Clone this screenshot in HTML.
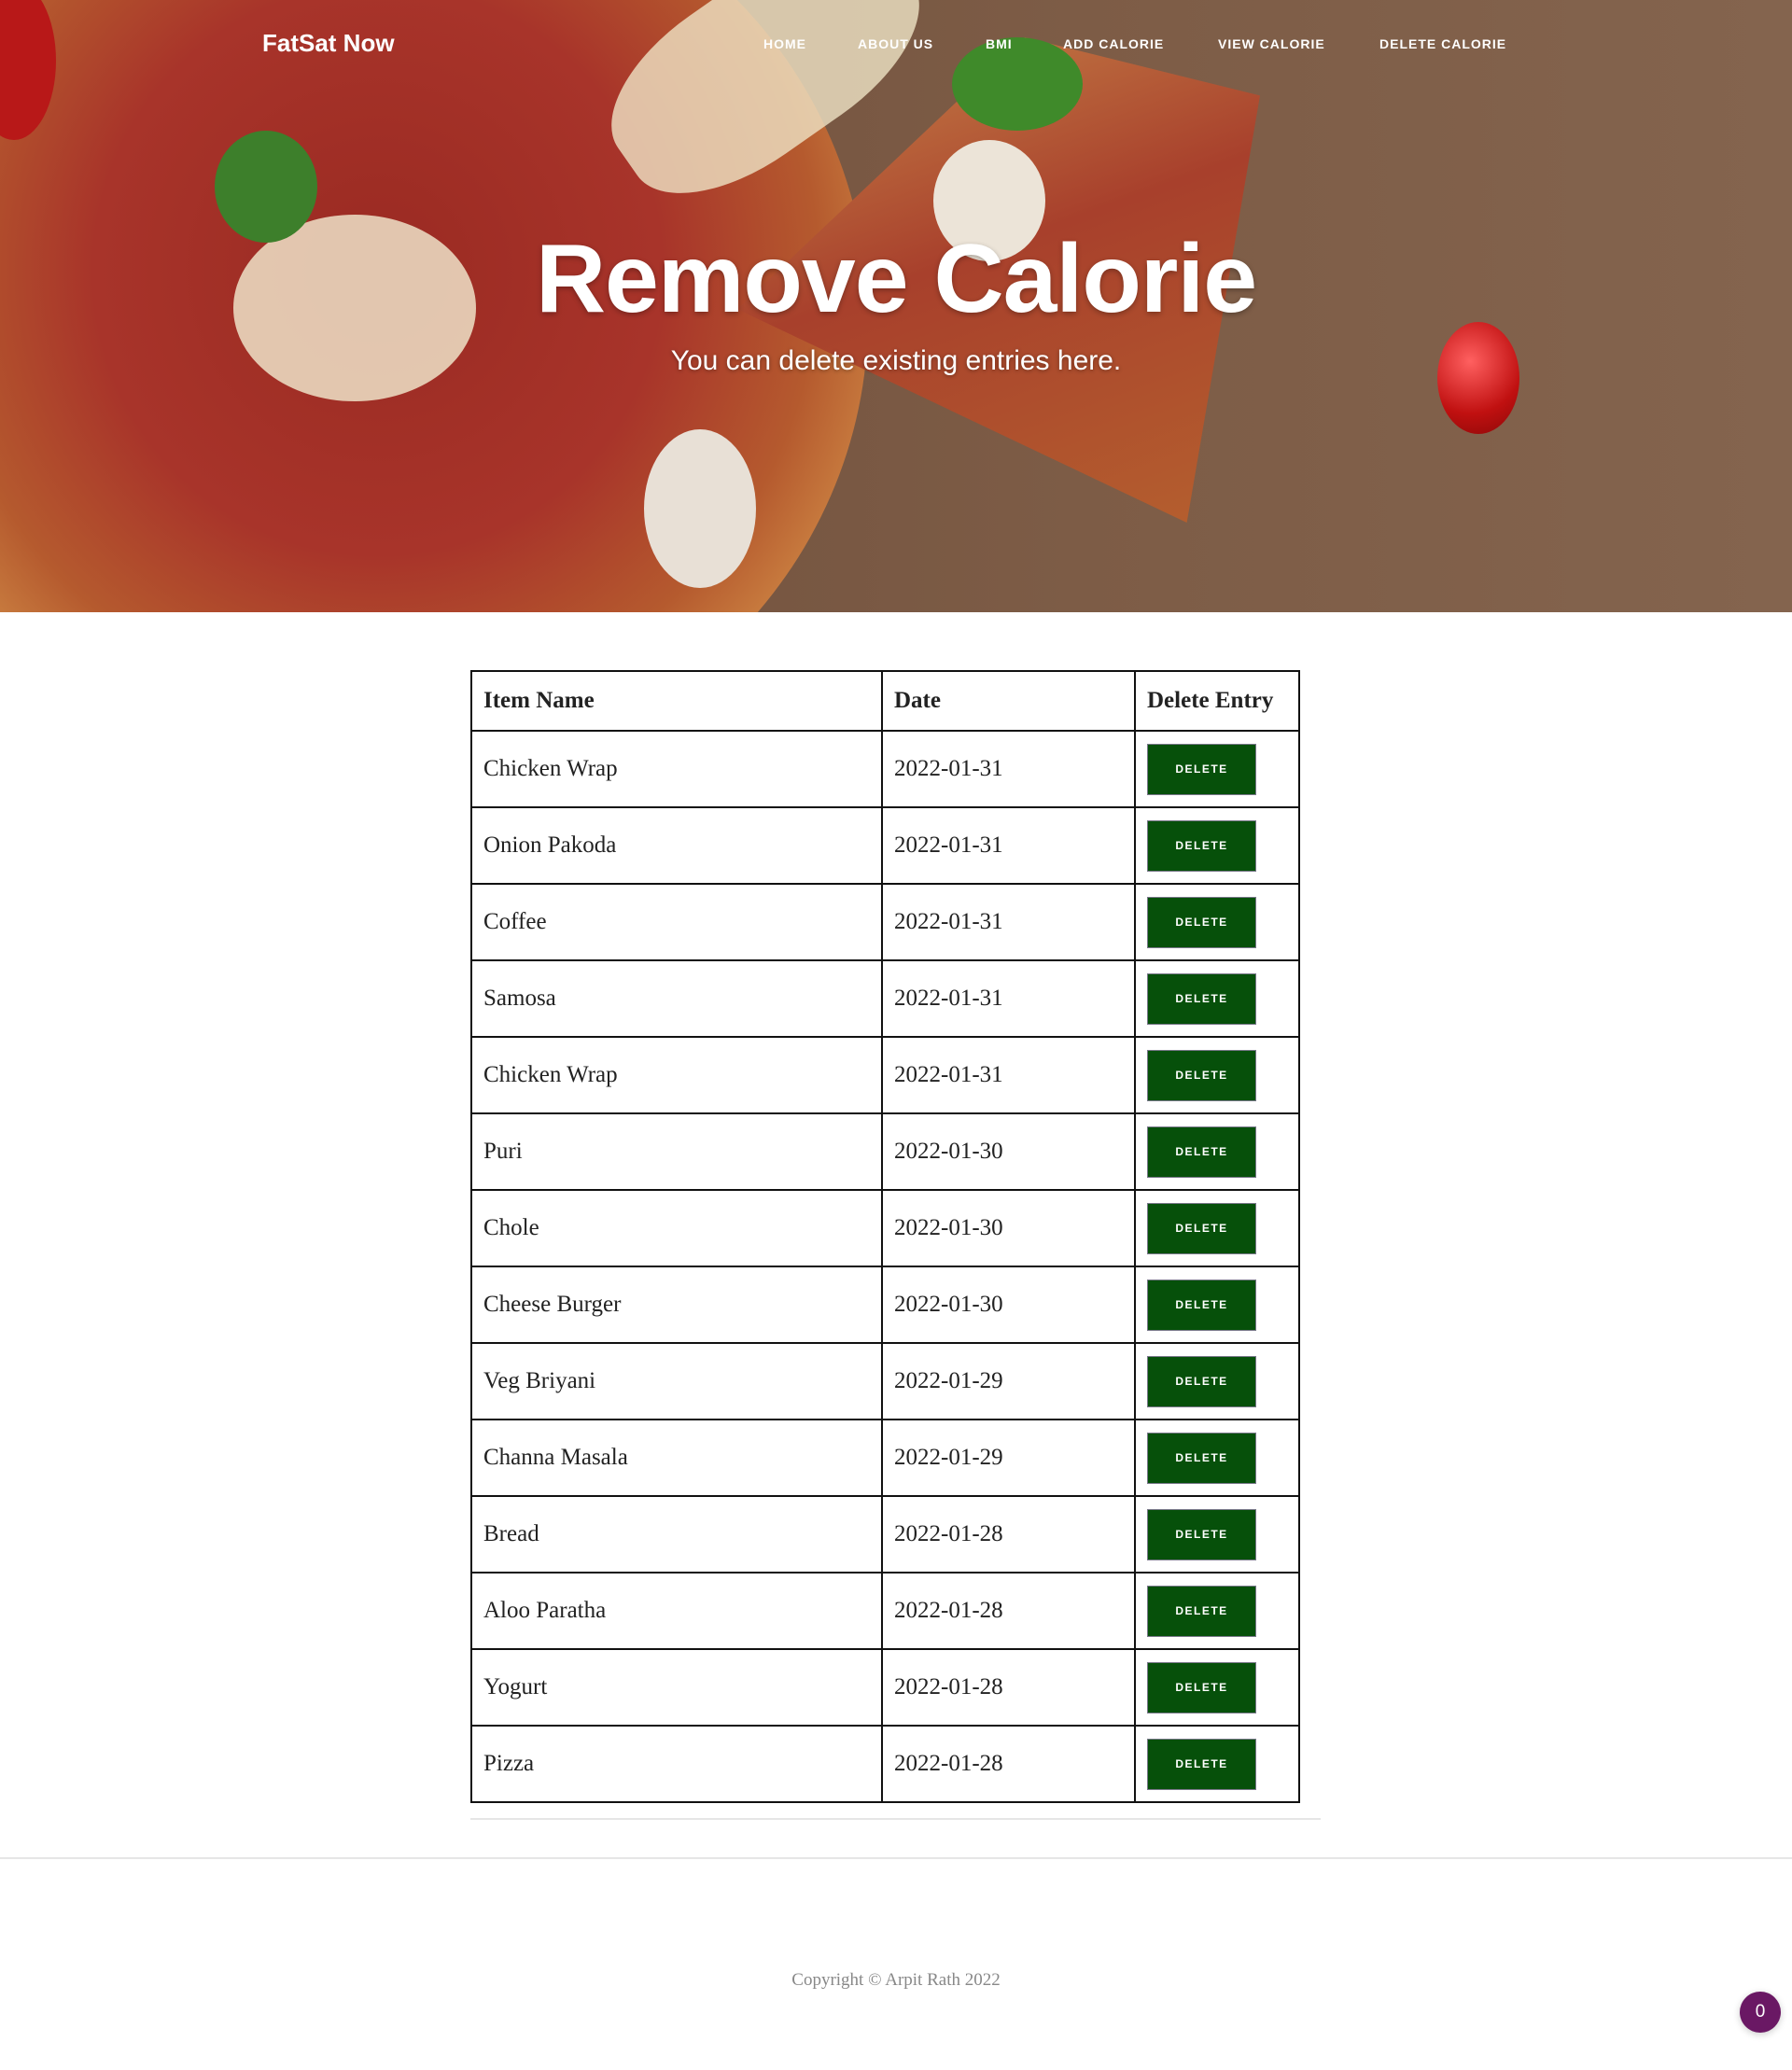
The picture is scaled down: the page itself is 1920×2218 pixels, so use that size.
<!DOCTYPE html>
<html><head><meta charset="utf-8"><style>
*{margin:0;padding:0;box-sizing:border-box}
body{width:1920px;height:2218px;background:#fff;font-family:"Liberation Serif",serif;position:relative;overflow:hidden}
.hero{position:absolute;left:0;top:0;width:1920px;height:656px;overflow:hidden;
background:linear-gradient(90deg,#6a4a38 0%,#7d5c46 60%,#84644e 100%)}
.hero .s{position:absolute}
.nav{position:absolute;top:0;left:0;width:1920px;height:96px;font-family:"Liberation Sans",sans-serif;color:#fff;font-weight:bold}
.brand{position:absolute;left:281px;top:31px;font-size:26px}
.nav a{position:absolute;top:39px;font-size:14px;letter-spacing:1px;color:#fff;text-decoration:none}
h1{position:absolute;left:0;width:1920px;top:240px;text-align:center;color:#fff;font-family:"Liberation Sans",sans-serif;font-size:104px;font-weight:bold;text-shadow:0 2px 6px rgba(0,0,0,.3);letter-spacing:-1px}
.sub{position:absolute;left:0;width:1920px;top:370px;text-align:center;color:#fff;font-family:"Liberation Sans",sans-serif;font-size:30px;font-weight:normal;text-shadow:0 1px 4px rgba(0,0,0,.4)}
table{position:absolute;left:504px;top:718px;width:889px;border-collapse:collapse;font-size:25px;color:#222}
td,th{border:2px solid #111;padding:0 12px;text-align:left;height:82px}
th{height:64px;font-weight:bold}
td:nth-child(1),th:nth-child(1){width:440px}
td:nth-child(2),th:nth-child(2){width:271px}
.b{display:inline-block;width:117px;height:55px;background:#06500a;border:1px solid #778;color:#fff;font-family:"Liberation Sans",sans-serif;font-weight:bold;font-size:12px;letter-spacing:1.5px;line-height:53px;text-align:center;vertical-align:middle}
.hr1{position:absolute;left:504px;top:1948px;width:911px;height:2px;background:#e6e6e6}
.hr2{position:absolute;left:0;top:1990px;width:1920px;height:2px;background:#e6e6e6}
.copy{position:absolute;left:0;width:1920px;top:2111px;text-align:center;color:#888;font-size:19px}
.badge{position:absolute;left:1864px;top:2134px;width:44px;height:44px;border-radius:50%;background:#6a1864;color:#fff;font-family:"Liberation Sans",sans-serif;font-size:19px;text-align:center;line-height:44px;box-shadow:0 2px 8px rgba(0,0,0,.2)}
</style></head><body>
<div class="hero">
 <div class="s" style="left:-120px;top:-160px;width:1050px;height:1000px;border-radius:50%;background:radial-gradient(circle at 50% 45%,#9a2a22 0%,#a8342a 40%,#b55a2e 62%,#c77a3e 72%,#8a4a2c 80%,transparent 81%)"></div>
 <div class="s" style="left:250px;top:230px;width:260px;height:200px;border-radius:50%;background:#eee2c8;opacity:.85"></div>
 <div class="s" style="left:640px;top:-20px;width:360px;height:180px;border-radius:40%;background:#efe3c6;opacity:.8;transform:rotate(-35deg)"></div>
 <div class="s" style="left:790px;top:40px;width:560px;height:520px;background:linear-gradient(160deg,#c9884a,#a8402c 45%,#b5602e);clip-path:polygon(55% 0%,100% 12%,86% 100%,0% 56%)"></div>
 <div class="s" style="left:1540px;top:345px;width:88px;height:120px;border-radius:50%;background:radial-gradient(circle at 40% 35%,#ff6060,#c01010 60%,#8a0808)"></div>
 <div class="s" style="left:-30px;top:-20px;width:90px;height:170px;border-radius:50%;background:#b81818"></div>
 <div class="s" style="left:1020px;top:40px;width:140px;height:100px;border-radius:50%;background:#3f8a2a"></div>
 <div class="s" style="left:230px;top:140px;width:110px;height:120px;border-radius:50%;background:#3d7f2b"></div>
 <div class="s" style="left:690px;top:460px;width:120px;height:170px;border-radius:50%;background:#e8e0d6"></div>
 <div class="s" style="left:1000px;top:150px;width:120px;height:130px;border-radius:50%;background:#ece4d8"></div>
 <div class="nav">
  <div class="brand">FatSat Now</div>
  <a style="left:818px">HOME</a>
  <a style="left:919px">ABOUT US</a>
  <a style="left:1056px">BMI</a>
  <a style="left:1139px">ADD CALORIE</a>
  <a style="left:1305px">VIEW CALORIE</a>
  <a style="left:1478px">DELETE CALORIE</a>
 </div>
 <h1>Remove Calorie</h1>
 <div class="sub">You can delete existing entries here.</div>
</div>
<table>
<tr><th>Item Name</th><th>Date</th><th>Delete Entry</th></tr>
<tr><td>Chicken Wrap</td><td>2022-01-31</td><td><span class="b">DELETE</span></td></tr>
<tr><td>Onion Pakoda</td><td>2022-01-31</td><td><span class="b">DELETE</span></td></tr>
<tr><td>Coffee</td><td>2022-01-31</td><td><span class="b">DELETE</span></td></tr>
<tr><td>Samosa</td><td>2022-01-31</td><td><span class="b">DELETE</span></td></tr>
<tr><td>Chicken Wrap</td><td>2022-01-31</td><td><span class="b">DELETE</span></td></tr>
<tr><td>Puri</td><td>2022-01-30</td><td><span class="b">DELETE</span></td></tr>
<tr><td>Chole</td><td>2022-01-30</td><td><span class="b">DELETE</span></td></tr>
<tr><td>Cheese Burger</td><td>2022-01-30</td><td><span class="b">DELETE</span></td></tr>
<tr><td>Veg Briyani</td><td>2022-01-29</td><td><span class="b">DELETE</span></td></tr>
<tr><td>Channa Masala</td><td>2022-01-29</td><td><span class="b">DELETE</span></td></tr>
<tr><td>Bread</td><td>2022-01-28</td><td><span class="b">DELETE</span></td></tr>
<tr><td>Aloo Paratha</td><td>2022-01-28</td><td><span class="b">DELETE</span></td></tr>
<tr><td>Yogurt</td><td>2022-01-28</td><td><span class="b">DELETE</span></td></tr>
<tr><td>Pizza</td><td>2022-01-28</td><td><span class="b">DELETE</span></td></tr>
</table>
<div class="hr1"></div>
<div class="hr2"></div>
<div class="copy">Copyright © Arpit Rath 2022</div>
<div class="badge">0</div>
</body></html>
